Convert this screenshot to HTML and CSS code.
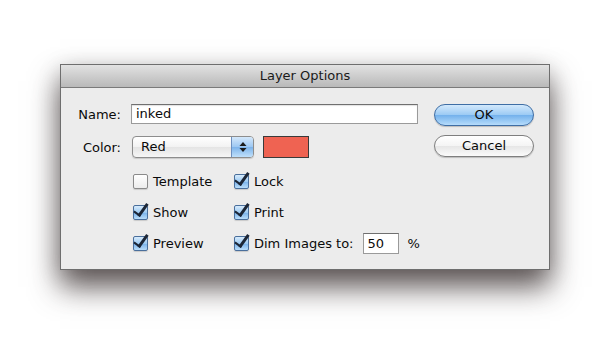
FILE: index.html
```html
<!DOCTYPE html>
<html>

<head>
    <title>Layer Options</title>
    <link rel="stylesheet" href="styles.css">
</head>

<body>
    <div class="dialog">
        <div class="titlebar">Layer Options</div>
        <div class="content">
            <div class="form">
                <div class="row name-row">
                    <span class="label">Name:</span>
                    <div class="textfield">inked</div>
                </div>
                <div class="row color-row">
                    <span class="label">Color:</span>
                    <div class="popup">
                        <span class="popup-text">Red</span>
                        <span class="stepper">
                            <svg width="10" height="14" viewBox="0 0 10 14">
                                <path d="M5 2 L8.5 6 L1.5 6 Z" fill="#1a1a1a"/>
                                <path d="M5 12 L8.5 8 L1.5 8 Z" fill="#1a1a1a"/>
                            </svg>
                        </span>
                    </div>
                    <div class="swatch"></div>
                </div>
                <div class="checks">
                    <div class="check-row first">
                        <label class="check col1"><span class="box"></span>Template</label>
                        <label class="check"><span class="box on"></span>Lock</label>
                    </div>
                    <div class="check-row second">
                        <label class="check col1"><span class="box on"></span>Show</label>
                        <label class="check"><span class="box on"></span>Print</label>
                    </div>
                    <div class="check-row third">
                        <label class="check col1"><span class="box on"></span>Preview</label>
                        <label class="check"><span class="box on"></span>Dim Images to:</label>
                        <div class="smallfield">50</div>
                        <span class="percent">%</span>
                    </div>
                </div>
            </div>
            <div class="buttons">
                <div class="btn ok">OK</div>
                <div class="btn">Cancel</div>
            </div>
        </div>
    </div>
</body>
</html>
```

FILE: styles.css
```css
body {
    background: #ffffff;
    font-family: "DejaVu Sans", "Liberation Sans", sans-serif;
    font-size: 13px;
    color: #0a0a0a;
    margin: 0;
    height: 350px;
    overflow: hidden;
}

.dialog {
    width: 488px;
    margin: 64px 0 0 60px;
    border: 1px solid #6e6e6e;
    background: #ececec;
    box-shadow: 0 17px 28px rgba(45, 35, 35, 0.75), 0 4px 22px rgba(0, 0, 0, 0.15);
}

.titlebar {
    height: 22px;
    line-height: 22px;
    text-align: center;
    background: linear-gradient(to bottom, #e2e2e2, #c9c9c9 60%, #b9b9b9);
    border-bottom: 1px solid #7a7a7a;
    color: #1a1a1a;
}

.content {
    display: flex;
    padding: 16px 15px 15px 8px;
}

.form {
    width: 349px;
}

.row {
    display: flex;
    align-items: center;
}

.label {
    width: 52px;
    margin-right: 10px;
    text-align: right;
}

.textfield {
    width: 281px;
    height: 18px;
    line-height: 18px;
    padding-left: 4px;
    background: #fff;
    border: 1px solid #9a9a9a;
    border-top-color: #6f6f6f;
    box-shadow: inset 0 1px 1px rgba(0, 0, 0, 0.12);
}

.color-row {
    margin-top: 12px;
}

.popup {
    display: flex;
    width: 120px;
    height: 20px;
    margin-left: 1px;
    border: 1px solid #8d8d8d;
    border-radius: 4px;
    background: linear-gradient(to bottom, #ffffff, #f2f2f2 50%, #e4e4e4 51%, #f6f6f6);
    box-shadow: 0 1px 1px rgba(0, 0, 0, 0.15);
    overflow: hidden;
}

.popup-text {
    flex: 1;
    line-height: 20px;
    padding-left: 8px;
}

.stepper {
    width: 21px;
    display: flex;
    align-items: center;
    justify-content: center;
    border-left: 1px solid #6d8fbf;
    background: linear-gradient(to bottom, #d4e8fb, #9cc7f2 50%, #7db3ea 51%, #bfe0fb);
}

.swatch {
    width: 44px;
    height: 20px;
    margin-left: 9px;
    background: #ef6352;
    border: 1px solid #3a3a3a;
}

.checks {
    padding-left: 64px;
}

.check-row {
    display: flex;
    align-items: center;
    height: 21px;
    white-space: nowrap;
}

.check-row.first {
    margin-top: 13px;
}

.check-row.second {
    margin-top: 10px;
}

.check-row.third {
    margin-top: 10px;
}

.check {
    display: flex;
    align-items: center;
    flex-shrink: 0;
}

.col1 {
    width: 101px;
}

.box {
    position: relative;
    width: 13px;
    height: 13px;
    margin-right: 5px;
    border: 1px solid #8a8a8a;
    border-radius: 2px;
    background: linear-gradient(to bottom, #ffffff, #ececec);
    box-shadow: 0 1px 1px rgba(0, 0, 0, 0.15);
}

.box.on {
    border-color: #4a6f9c;
    background: linear-gradient(to bottom, #d7ebfc, #9ccaf3 50%, #78b1ea 51%, #b9ddfa);
}

.box.on::after {
    content: "";
    position: absolute;
    left: 3px;
    top: -5px;
    width: 5px;
    height: 13px;
    border-right: 3px solid #1c2636;
    border-bottom: 2.5px solid #1c2636;
    transform: rotate(36deg);
    transform-origin: center;
}

.smallfield {
    flex-shrink: 0;
    width: 31px;
    height: 19px;
    line-height: 19px;
    padding-left: 3px;
    margin-left: 10px;
    background: #fff;
    border: 1px solid #9a9a9a;
    border-top-color: #6f6f6f;
}

.percent {
    margin-left: 8px;
}

.buttons {
    display: flex;
    flex-direction: column;
    margin-left: 16px;
    width: 100px;
}

.btn {
    height: 20px;
    line-height: 20px;
    text-align: center;
    border: 1px solid #7f7f7f;
    border-radius: 11px;
    background: linear-gradient(to bottom, #ffffff, #f4f4f4 50%, #e6e6e6 51%, #fbfbfb);
    box-shadow: 0 1px 1px rgba(0, 0, 0, 0.2);
}

.btn.ok {
    border-color: #3f6ea5;
    background: linear-gradient(to bottom, #d3e9fc, #9bcaf4 50%, #73b1ec 51%, #b6dcfb);
    margin-bottom: 9px;
}
```
